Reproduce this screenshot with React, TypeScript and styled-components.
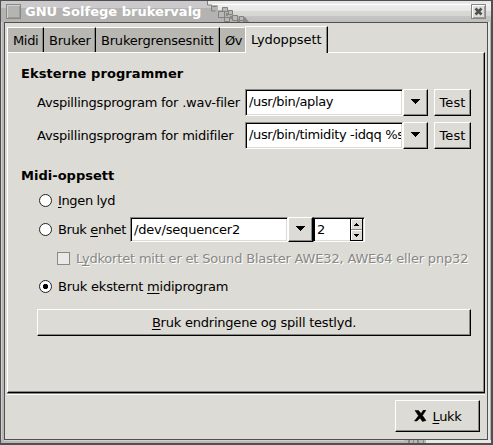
import React from "react";
import styled, { createGlobalStyle, css } from "styled-components";

const Global = createGlobalStyle`
  *, *::before, *::after { box-sizing: border-box; }
  body { margin: 0; background: #505050; overflow: hidden; }
`;

const face = "#dcdbd5";
const shade = "#888884";

const Frame = styled.div`
  width: 493px;
  height: 445px;
  display: flex;
  flex-direction: column;
  border: solid #505050;
  border-width: 1px 2px 2px 1px;
  background: #b8b8b6;
  font: 13px/17px "DejaVu Sans", sans-serif;
  color: #000;
  white-space: nowrap;
`;

const TitleBar = styled.header`
  height: 21px;
  display: flex;
  position: relative;
  align-items: center;
  padding: 0 5px 0 5px;
`;

const TitleArt = styled.svg`
  position: absolute;
  left: 0;
  top: 0;
`;

const WindowButton = styled.span<{ $close?: boolean }>`
  position: relative;
  display: flex;
  width: 15px;
  height: 15px;
  border: 1px solid ${shade};
  background: ${(p) => (p.$close ? "#dddddb" : "#b4b4b2")};
  box-shadow: inset 1px 1px ${(p) => (p.$close ? "#fff" : "#d2d2d2")}, inset -1px -1px #9c9c9a;
`;

const Title = styled.h1`
  position: relative;
  flex: 1;
  margin: 0 0 0 4px;
  font-size: 13px;
  line-height: 17px;
  letter-spacing: 0.02px;
  color: #fff;
`;

const Middle = styled.div`
  flex: 1;
  min-height: 0;
  display: flex;
  padding: 0 3px;
  background: linear-gradient(to right, #b8b6b7 50%, #e6e8e6 50%);
  box-shadow: inset 1px 0 #cfcfcf, inset -1px 0 #b0b0b0;
`;

const Client = styled.main`
  flex: 1;
  min-width: 0;
  display: flex;
  flex-direction: column;
  padding: 3px 2px 0;
  border: 1px solid #505050;
  background: ${face};
`;

const BottomEdge = styled.svg`
  display: block;
`;

const Tabs = styled.nav`
  display: flex;
  align-items: flex-end;
  height: 26px;
`;

const Tab = styled.div<{ $w: number; $ls: number; $active?: boolean; $last?: boolean }>`
  width: ${(p) => p.$w}px;
  height: 25px;
  padding: 4px 0 0 5px;
  letter-spacing: ${(p) => p.$ls}px;
  border: solid;
  border-width: 1px 1px 0 0;
  border-color: #fff #000 #fff #fff;
  background: #b8b7b2;
  box-shadow: inset -1px 0 ${shade};
  &:first-child { border-left-width: 1px; }
  ${(p) => p.$last && css`
    border-right-color: #b8b7b2;
    box-shadow: none;
  `}
  ${(p) => p.$active && css`
    height: 27px;
    margin-bottom: -1px;
    border-left-width: 1px;
    background: ${face};
    position: relative;
  `}
`;

const Page = styled.section`
  height: 341px;
  padding: 12px 12px 0 13px;
  border: 1px solid #000;
  border-top-color: #fff;
  border-left-color: #fff;
  box-shadow: inset -1px -1px ${shade}, 0 1px ${shade}, 0 2px #fff;
`;

const Heading = styled.h2<{ $gap?: number; $ls?: number }>`
  margin: ${(p) => p.$gap ?? 0}px 0 0;
  height: 17px;
  font-size: 13px;
  line-height: 17px;
  letter-spacing: ${(p) => p.$ls ?? 0}px;
`;

const Row = styled.div<{ $h: number; $mt: number; $indent: number }>`
  display: flex;
  align-items: center;
  height: ${(p) => p.$h}px;
  margin: ${(p) => p.$mt}px 0 0 ${(p) => p.$indent}px;
`;

const Label = styled.span<{ $w?: number; $ls?: number }>`
  flex: none;
  width: ${(p) => (p.$w ? `${p.$w}px` : "auto")};
  letter-spacing: ${(p) => p.$ls ?? -0.22}px;
`;

const Mnemonic = styled.span`
  text-decoration: underline 1px;
  text-underline-offset: 2px;
  text-decoration-skip-ink: none;
`;

const Field = styled.div<{ $w: number; $lift?: number }>`
  flex: none;
  width: ${(p) => p.$w}px;
  align-self: stretch;
  display: flex;
  align-items: center;
  padding: 0 0 ${(p) => p.$lift ?? 0}px 3px;
  background: #fff;
  border: 1px solid;
  border-color: ${shade} #fff #fff ${shade};
  box-shadow: inset 1px 1px #000, inset -1px -1px ${face};
`;

const FieldText = styled.span<{ $ls: number }>`
  width: 152px;
  overflow: hidden;
  letter-spacing: ${(p) => p.$ls}px;
`;

const Button = styled.button<{ $w: number; $h?: number; $ml?: number }>`
  width: ${(p) => p.$w}px;
  height: ${(p) => (p.$h ? `${p.$h}px` : "100%")};
  margin: 0 0 0 ${(p) => p.$ml ?? 0}px;
  padding: 0;
  display: flex;
  flex: none;
  align-items: center;
  justify-content: center;
  font: inherit;
  color: #000;
  background: ${face};
  border: 1px solid;
  border-color: #fff #000 #000 #fff;
  box-shadow: inset -1px -1px ${shade};
`;

const ArrowButton = styled(Button)`
  padding: 0 1px 2px 0;
`;

const Spin = styled.div`
  display: flex;
  width: 52px;
  height: 25px;
  padding: 1px;
  border: 1px solid;
  border-color: ${shade} #fff #fff #000;
  background: #fff;
  box-shadow: inset 1px 1px #000, inset -1px -1px ${face};
`;

const SpinText = styled.span`
  flex: 1;
  padding: 2px 0 0 2px;
`;

const SpinButtons = styled.div`
  display: grid;
  grid-template-rows: 11px 11px;
  width: 13px;
  height: 22px;
  border: solid #000;
  border-width: 0 1px;
  background: ${face};
`;

const SpinButton = styled.span`
  display: grid;
  place-items: center;
  border-bottom: 1px solid ${shade};
  box-shadow: inset 1px 1px #fff;
  &:last-child { border-bottom-color: #000; }
`;

const Radio = styled.span<{ $on?: boolean }>`
  flex: none;
  width: 13px;
  height: 13px;
  margin-right: 6px;
  border: 1px solid #222;
  border-radius: 50%;
  background: ${(p) => (p.$on ? "radial-gradient(circle, #000 2.3px, #fff 3px)" : "#fff")};
`;

const Check = styled.span`
  flex: none;
  width: 13px;
  height: 13px;
  margin-right: 6px;
  border: 1px solid ${shade};
  background: #e9e9e7;
`;

const Disabled = styled(Label)`
  color: ${shade};
  text-shadow: 1px 1px #fff;
`;

const Footer = styled.footer`
  display: flex;
  justify-content: flex-end;
  padding: 7px 5px 0 0;
`;

const ButtonContent = styled.span`
  display: flex;
  align-items: center;
  gap: 6px;
`;

const Arrow = () => (
  <svg width="9" height="5" viewBox="0 0 9 5" shapeRendering="crispEdges">
    <path d="M0 0h9v1h-1v1h-1v1h-1v1h-1v1h-1v-1h-1v-1h-1v-1h-1v-1h-1z" />
  </svg>
);

const Tick = ({ up }: { up?: boolean }) => (
  <svg width="5" height="3" viewBox="0 0 5 3" shapeRendering="crispEdges">
    <path d={up ? "M2 0h1v1h1v1h1v1h-5v-1h1v-1h1z" : "M0 0h5v1h-1v1h-1v1h-1v-1h-1v-1h-1z"} />
  </svg>
);

export default function App() {
  return (
    <>
      <Global />
      <Frame>
        <TitleBar>
          <TitleArt width="490" height="21" viewBox="0 0 490 21">
            <defs>
              <linearGradient id="bright" x1="0" y1="0" x2="0" y2="21" gradientUnits="userSpaceOnUse">
                <stop offset="0" stopColor="#e2e2e2" />
                <stop offset=".15" stopColor="#eeeeee" />
                <stop offset=".45" stopColor="#e8e8e7" />
                <stop offset=".5" stopColor="#d8d8d5" />
                <stop offset=".7" stopColor="#d5d5d2" />
                <stop offset=".74" stopColor="#c5c5c4" />
                <stop offset="1" stopColor="#bebebe" />
              </linearGradient>
            </defs>
            <path fill="#b3b3b1" d="M0 0h490v21H0z" />
            <path fill="#cbc9cb" d="M0 0h210v7H0z" />
            <path fill="url(#bright)" d="M206 0H490V21H247L239 15H233L229 9H217V4H206z" />
            <path fill="#fff" d="M212 3H486v1H212z" />
            <g fill="#b9b9b7" stroke="#80807e">
              <path fill="none" d="M206.500 0v4h4v6h4M211.500 5.500h4" />
              <path d="M221.500 6.500h5v4h-5zM217.500 10.500h6v6h-6zM227.500 9.500h4v4h-4zM223.500 16.500h5v4h-5zM231.500 14.500h5v5h-5zM238.500 15.500h4v4h-4z" />
            </g>
            <path fill="#898987" d="M225 12h2v3h-2zM229 15h2v3h-2zM236 18h3v3h-3zM242 16h2l4 5h-6z" />
          </TitleArt>
          <WindowButton />
          <Title>GNU Solfege brukervalg</Title>
          <WindowButton $close>
            <svg width="13" height="13" viewBox="0 0 13 13">
              <path d="M3.500 3.500l6 6M9.500 3.500l-6 6" stroke="#505050" strokeWidth="2.600" />
            </svg>
          </WindowButton>
        </TitleBar>
        <Middle>
          <Client>
            <Tabs>
              <Tab $w={37} $ls={-0.35}>Midi</Tab>
              <Tab $w={52} $ls={-0.2}>Bruker</Tab>
              <Tab $w={124} $ls={-0.2}>Brukergrensesnitt</Tab>
              <Tab $w={25} $ls={-0.4} $last>Øv</Tab>
              <Tab $w={83} $ls={-0.1} $active>Lydoppsett</Tab>
            </Tabs>
            <Page>
              <Heading $ls={0.08}>Eksterne programmer</Heading>
              <Row $h={27} $mt={7} $indent={16}>
                <Label $w={208}>Avspillingsprogram for .wav-filer</Label>
                <Field $w={158} $lift={2}><FieldText $ls={-0.35}>/usr/bin/aplay</FieldText></Field>
                <ArrowButton $w={25}><Arrow /></ArrowButton>
                <Button $w={37} $ml={6}><Label $ls={0.15}>Test</Label></Button>
              </Row>
              <Row $h={27} $mt={6} $indent={16}>
                <Label $w={208}>Avspillingsprogram for midifiler</Label>
                <Field $w={158} $lift={2}><FieldText $ls={-0.35}>/usr/bin/timidity -idqq %s</FieldText></Field>
                <ArrowButton $w={25}><Arrow /></ArrowButton>
                <Button $w={37} $ml={6}><Label $ls={0.15}>Test</Label></Button>
              </Row>
              <Heading $gap={18} $ls={0.02}>Midi-oppsett</Heading>
              <Row $h={17} $mt={8} $indent={18}>
                <Radio />
                <Label $ls={-0.35}><Mnemonic>I</Mnemonic>ngen lyd</Label>
              </Row>
              <Row $h={25} $mt={8} $indent={18}>
                <Radio />
                <Label $w={72} $ls={-0.38}>Bruk <Mnemonic>e</Mnemonic>nhet</Label>
                <Field $w={158}><FieldText $ls={-0.2}>/dev/sequencer2</FieldText></Field>
                <ArrowButton $w={25}><Arrow /></ArrowButton>
                <Spin>
                  <SpinText>2</SpinText>
                  <SpinButtons>
                    <SpinButton><Tick up /></SpinButton>
                    <SpinButton><Tick /></SpinButton>
                  </SpinButtons>
                </Spin>
              </Row>
              <Row $h={17} $mt={8} $indent={36}>
                <Check />
                <Disabled $ls={-0.18}>L<Mnemonic>y</Mnemonic>dkortet mitt er et Sound Blaster AWE32, AWE64 eller pnp32</Disabled>
              </Row>
              <Row $h={17} $mt={11} $indent={18}>
                <Radio $on />
                <Label>Bruk eksternt <Mnemonic>m</Mnemonic>idiprogram</Label>
              </Row>
              <Row $h={27} $mt={14} $indent={16}>
                <Button $w={434}><Label><Mnemonic>B</Mnemonic>ruk endringene og spill testlyd.</Label></Button>
              </Row>
            </Page>
            <Footer>
              <Button $w={85} $h={32}>
                <ButtonContent>
                  <svg width="13" height="12" viewBox="0 0 13 12">
                    <path d="M1 .500h3.500L7 3.500 9.500 0H12L8.500 5.500l3.500 5L8.500 11.500 6 8 3 11H.500L4.500 5.800z" stroke="#000" strokeWidth=".5" />
                  </svg>
                  <Label $ls={-0.35}><Mnemonic>L</Mnemonic>ukk</Label>
                </ButtonContent>
              </Button>
            </Footer>
          </Client>
        </Middle>
        <BottomEdge width="490" height="3" shapeRendering="crispEdges">
          <path fill="#b8b6b7" d="M0 0h490v3H0z" />
          <path fill="#d0d0d0" d="M3 0h400v1H3z" />
          <path fill="#e7e7e5" d="M425 0h65v3h-65z" />
          <path fill="#898987" d="M407 0h2v3h-2zM412 0h1v3h-1zM416 0h2v3h-2zM422 0h1v3h-1z" />
        </BottomEdge>
      </Frame>
    </>
  );
}
